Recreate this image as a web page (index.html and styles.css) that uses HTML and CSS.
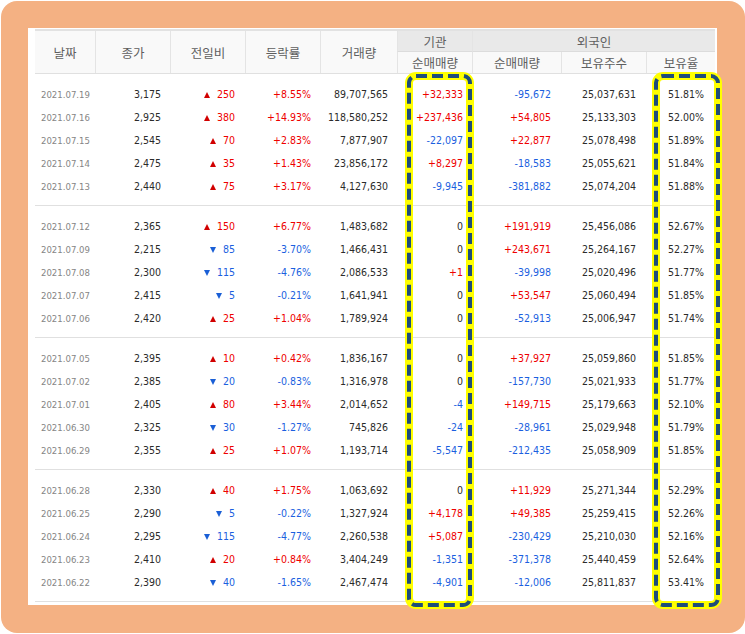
FILE: index.html
```html
<!DOCTYPE html>
<html lang="ko">
<head>
<meta charset="utf-8">
<title>외국인·기관 순매매 거래량</title>
<link rel="stylesheet" href="styles.css">
</head>
<body>
<div class="frame">
  <div class="panel">
    <div class="sheet">
      <div class="head">
        <div class="th span2 c1">날짜</div>
        <div class="th span2 c2">종가</div>
        <div class="th span2 c3">전일비</div>
        <div class="th span2 c4">등락률</div>
        <div class="th span2 c5">거래량</div>
        <div class="th grp c6">기관</div>
        <div class="th grp c7">외국인</div>
        <div class="th sub c6">순매매량</div>
        <div class="th sub c7s">순매매량</div>
        <div class="th sub c8">보유주수</div>
        <div class="th sub c9">보유율</div>
      </div>

      <div class="block">
        <div class="row"><span class="d">2021.07.19</span><span>3,175</span><span class="up"><i class="tu"></i>250</span><span class="up">+8.55%</span><span>89,707,565</span><span class="up">+32,333</span><span class="dn">-95,672</span><span>25,037,631</span><span class="r">51.81%</span></div>
        <div class="row"><span class="d">2021.07.16</span><span>2,925</span><span class="up"><i class="tu"></i>380</span><span class="up">+14.93%</span><span>118,580,252</span><span class="up">+237,436</span><span class="up">+54,805</span><span>25,133,303</span><span class="r">52.00%</span></div>
        <div class="row"><span class="d">2021.07.15</span><span>2,545</span><span class="up"><i class="tu"></i>70</span><span class="up">+2.83%</span><span>7,877,907</span><span class="dn">-22,097</span><span class="up">+22,877</span><span>25,078,498</span><span class="r">51.89%</span></div>
        <div class="row"><span class="d">2021.07.14</span><span>2,475</span><span class="up"><i class="tu"></i>35</span><span class="up">+1.43%</span><span>23,856,172</span><span class="up">+8,297</span><span class="dn">-18,583</span><span>25,055,621</span><span class="r">51.84%</span></div>
        <div class="row"><span class="d">2021.07.13</span><span>2,440</span><span class="up"><i class="tu"></i>75</span><span class="up">+3.17%</span><span>4,127,630</span><span class="dn">-9,945</span><span class="dn">-381,882</span><span>25,074,204</span><span class="r">51.88%</span></div>
      </div>

      <div class="block">
        <div class="row"><span class="d">2021.07.12</span><span>2,365</span><span class="up"><i class="tu"></i>150</span><span class="up">+6.77%</span><span>1,483,682</span><span>0</span><span class="up">+191,919</span><span>25,456,086</span><span class="r">52.67%</span></div>
        <div class="row"><span class="d">2021.07.09</span><span>2,215</span><span class="dn"><i class="td"></i>85</span><span class="dn">-3.70%</span><span>1,466,431</span><span>0</span><span class="up">+243,671</span><span>25,264,167</span><span class="r">52.27%</span></div>
        <div class="row"><span class="d">2021.07.08</span><span>2,300</span><span class="dn"><i class="td"></i>115</span><span class="dn">-4.76%</span><span>2,086,533</span><span class="up">+1</span><span class="dn">-39,998</span><span>25,020,496</span><span class="r">51.77%</span></div>
        <div class="row"><span class="d">2021.07.07</span><span>2,415</span><span class="dn"><i class="td"></i>5</span><span class="dn">-0.21%</span><span>1,641,941</span><span>0</span><span class="up">+53,547</span><span>25,060,494</span><span class="r">51.85%</span></div>
        <div class="row"><span class="d">2021.07.06</span><span>2,420</span><span class="up"><i class="tu"></i>25</span><span class="up">+1.04%</span><span>1,789,924</span><span>0</span><span class="dn">-52,913</span><span>25,006,947</span><span class="r">51.74%</span></div>
      </div>

      <div class="block">
        <div class="row"><span class="d">2021.07.05</span><span>2,395</span><span class="up"><i class="tu"></i>10</span><span class="up">+0.42%</span><span>1,836,167</span><span>0</span><span class="up">+37,927</span><span>25,059,860</span><span class="r">51.85%</span></div>
        <div class="row"><span class="d">2021.07.02</span><span>2,385</span><span class="dn"><i class="td"></i>20</span><span class="dn">-0.83%</span><span>1,316,978</span><span>0</span><span class="dn">-157,730</span><span>25,021,933</span><span class="r">51.77%</span></div>
        <div class="row"><span class="d">2021.07.01</span><span>2,405</span><span class="up"><i class="tu"></i>80</span><span class="up">+3.44%</span><span>2,014,652</span><span class="dn">-4</span><span class="up">+149,715</span><span>25,179,663</span><span class="r">52.10%</span></div>
        <div class="row"><span class="d">2021.06.30</span><span>2,325</span><span class="dn"><i class="td"></i>30</span><span class="dn">-1.27%</span><span>745,826</span><span class="dn">-24</span><span class="dn">-28,961</span><span>25,029,948</span><span class="r">51.79%</span></div>
        <div class="row"><span class="d">2021.06.29</span><span>2,355</span><span class="up"><i class="tu"></i>25</span><span class="up">+1.07%</span><span>1,193,714</span><span class="dn">-5,547</span><span class="dn">-212,435</span><span>25,058,909</span><span class="r">51.85%</span></div>
      </div>

      <div class="block">
        <div class="row"><span class="d">2021.06.28</span><span>2,330</span><span class="up"><i class="tu"></i>40</span><span class="up">+1.75%</span><span>1,063,692</span><span>0</span><span class="up">+11,929</span><span>25,271,344</span><span class="r">52.29%</span></div>
        <div class="row"><span class="d">2021.06.25</span><span>2,290</span><span class="dn"><i class="td"></i>5</span><span class="dn">-0.22%</span><span>1,327,924</span><span class="up">+4,178</span><span class="up">+49,385</span><span>25,259,415</span><span class="r">52.26%</span></div>
        <div class="row"><span class="d">2021.06.24</span><span>2,295</span><span class="dn"><i class="td"></i>115</span><span class="dn">-4.77%</span><span>2,260,538</span><span class="up">+5,087</span><span class="dn">-230,429</span><span>25,210,030</span><span class="r">52.16%</span></div>
        <div class="row"><span class="d">2021.06.23</span><span>2,410</span><span class="up"><i class="tu"></i>20</span><span class="up">+0.84%</span><span>3,404,249</span><span class="dn">-1,351</span><span class="dn">-371,378</span><span>25,440,459</span><span class="r">52.64%</span></div>
        <div class="row"><span class="d">2021.06.22</span><span>2,390</span><span class="dn"><i class="td"></i>40</span><span class="dn">-1.65%</span><span>2,467,474</span><span class="dn">-4,901</span><span class="dn">-12,006</span><span>25,811,837</span><span class="r">53.41%</span></div>
      </div>
    </div>
  </div>

  <svg class="mark mark-inst" viewBox="0 0 69 537" aria-hidden="true">
    <rect class="glow" x="4" y="4" width="61" height="529" rx="7"/>
    <rect class="dash" x="4" y="4" width="61" height="529" rx="7"/>
  </svg>
  <svg class="mark mark-hold" viewBox="0 0 70 537" aria-hidden="true">
    <rect class="glow" x="4" y="4" width="62" height="529" rx="7"/>
    <rect class="dash" x="4" y="4" width="62" height="529" rx="7"/>
  </svg>
</div>
</body>
</html>
```

FILE: styles.css
```css
html, body {
  margin: 0;
  padding: 0;
  background: #ffffff;
}

.frame {
  position: relative;
  margin: 1px 0 0 1px;
  width: 744px;
  height: 632px;
  box-sizing: border-box;
  padding: 27px 28px 0 27px;
  background: #f4b183;
  border-radius: 16px;
}

.panel {
  background: #ffffff;
  height: 577px;
  box-sizing: border-box;
  padding: 1px 2px 0 7px;
}

.sheet {
  width: 680px;
}

/* header */
.head {
  display: grid;
  grid-template-columns: 60px 75px 75px 75px 77px 75px 89px 85px 69px;
  grid-template-rows: 21px 21px;
  border-top: 2px solid #e2e2e2;
  border-bottom: 1px solid #e0e0e0;
  font-family: "Noto Sans CJK KR", "Noto Sans", sans-serif;
  font-size: 12.5px;
  color: #5f5f5f;
}

.th {
  box-sizing: border-box;
  display: flex;
  align-items: center;
  justify-content: center;
  background: #f9f9f9;
  border-left: 1px solid #e4e4e4;
}

.th.c1 { border-left: 0; }
.span2 { grid-row: 1 / 3; }
.c1 { grid-column: 1; }
.c2 { grid-column: 2; }
.c3 { grid-column: 3; }
.c4 { grid-column: 4; }
.c5 { grid-column: 5; }
.c6 { grid-column: 6; }
.c7 { grid-column: 7 / 10; }
.c7s { grid-column: 7; }
.c8 { grid-column: 8; }
.c9 { grid-column: 9; }

.th.grp {
  grid-row: 1;
  background: #e9e9e9;
  border-bottom: 1px solid #dcdcdc;
}

.th.sub {
  grid-row: 2;
}

/* body */
.block {
  padding: 9px 0 7px;
  border-bottom: 1px solid #e0e0e0;
}

.row {
  display: grid;
  grid-template-columns: 60px 75px 75px 75px 77px 75px 89px 85px 69px;
  height: 23px;
  line-height: 23px;
  font-family: "DejaVu Sans Condensed", "DejaVu Sans", sans-serif;
  font-size: 10.5px;
  color: #2b2b2b;
  white-space: nowrap;
}

.row span {
  text-align: right;
  padding-right: 9px;
}

.row span:nth-child(3),
.row span:nth-child(7),
.row span:nth-child(8) {
  padding-right: 10px;
}

.row span.r {
  padding-right: 11px;
}

.row span.d {
  text-align: left;
  padding: 0 0 0 6px;
  font-size: 9.5px;
  color: #858585;
}

.up { color: #ee0000; }
.dn { color: #1b5fe0; }

.tu, .td {
  display: inline-block;
  width: 0;
  height: 0;
  margin-right: 7px;
  border-left: 3.5px solid transparent;
  border-right: 3.5px solid transparent;
  vertical-align: 0;
}

.tu {
  border-bottom: 6px solid #d10000;
}

.td {
  border-top: 6px solid #1a5fd6;
}

/* highlight overlays */
.mark {
  position: absolute;
  top: 71px;
  height: 537px;
  overflow: visible;
}

.mark-inst {
  left: 404px;
  width: 69px;
}

.mark-hold {
  left: 651px;
  width: 70px;
}

.mark rect {
  fill: none;
}

.mark .glow {
  stroke: #ffff00;
  stroke-width: 8;
}

.mark .dash {
  stroke: #1f4e79;
  stroke-width: 4;
  stroke-dasharray: 11 5;
}
```
